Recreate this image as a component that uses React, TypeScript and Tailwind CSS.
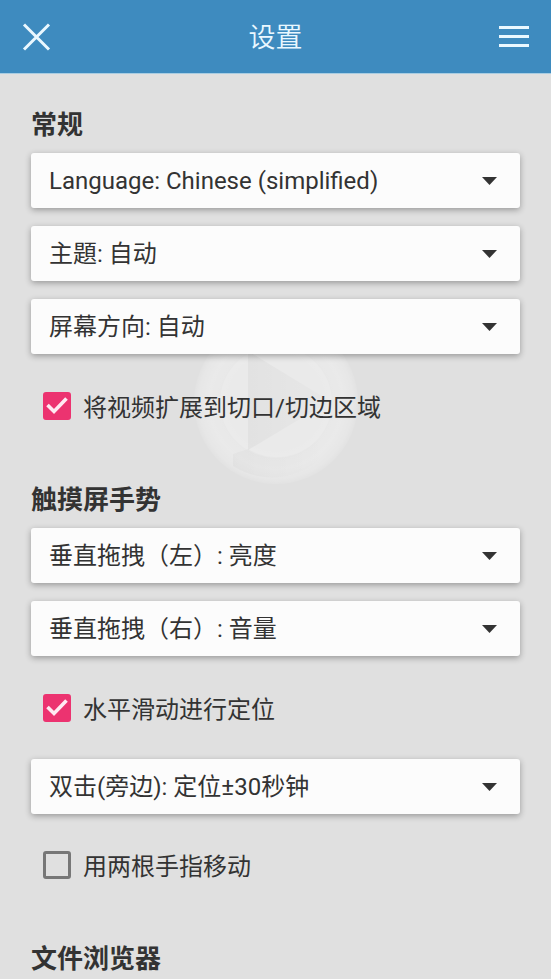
import { useState } from 'react';

interface SelectFieldProps {
  label: string;
  value: string;
}

const SelectField = ({ label, value }: SelectFieldProps) => (
  <div className="relative">
    <select
      aria-label={label}
      className="block w-full h-[55px] pl-[18px] pr-14 pt-px appearance-none rounded-[3px] bg-[#fcfcfc] text-2xl text-[#333] shadow-[0_2px_6px_rgba(0,0,0,0.32)] outline-none"
    >
      <option>{`${label}: ${value}`}</option>
    </select>
    <svg
      className="absolute right-[23px] top-6 pointer-events-none"
      width="15"
      height="8"
      viewBox="0 0 15 8"
      fill="#333"
    >
      <path d="M0 0h15L7.5 8z" />
    </svg>
  </div>
);

interface CheckFieldProps {
  label: string;
  defaultChecked?: boolean;
}

const CheckField = ({ label, defaultChecked = false }: CheckFieldProps) => {
  const [checked, setChecked] = useState(defaultChecked);

  return (
    <label className="flex items-center h-10 pl-3 gap-3 text-2xl">
      <span className="grid shrink-0">
        <input
          type="checkbox"
          checked={checked}
          onChange={(e) => setChecked(e.target.checked)}
          className="col-start-1 row-start-1 w-7 h-7 appearance-none rounded-[3px] border-3 border-[#777] checked:border-[#ec3370] checked:bg-[#ec3370]"
        />
        {checked && (
          <svg
            className="col-start-1 row-start-1 pointer-events-none"
            width="28"
            height="28"
            viewBox="0 0 28 28"
            fill="none"
            stroke="#ffeaf2"
            strokeWidth="3.6"
          >
            <path d="M4.5 13l6.5 6.5L23.5 6.5" />
          </svg>
        )}
      </span>
      <span className="pt-1">{label}</span>
    </label>
  );
};

// Faint play emblem behind the list
const PlayEmblem = () => (
  <svg
    className="absolute left-1/2 top-[320px] -translate-x-1/2 pointer-events-none"
    width="164"
    height="164"
    viewBox="0 0 164 164"
  >
    <defs>
      <radialGradient id="ring">
        <stop offset="0.6" stopColor="#fff" stopOpacity="0.24" />
        <stop offset="0.82" stopColor="#fff" stopOpacity="0.32" />
        <stop offset="0.94" stopColor="#fff" stopOpacity="0.22" />
        <stop offset="1" stopColor="#fff" stopOpacity="0.08" />
      </radialGradient>
      <linearGradient id="play" x1="0" x2="1">
        <stop offset="0" stopColor="#000" stopOpacity="0.035" />
        <stop offset="1" stopColor="#000" stopOpacity="0.01" />
      </linearGradient>
      <linearGradient id="shade" x1="0" x2="1">
        <stop offset="0" stopColor="#000" stopOpacity="0.025" />
        <stop offset="1" stopColor="#000" stopOpacity="0" />
      </linearGradient>
    </defs>
    <circle cx="82" cy="82" r="82" fill="url(#ring)" />
    <circle cx="82" cy="82" r="56" fill="#fff" fillOpacity="0.13" />
    <path d="M54 31v99l82-49z" fill="url(#play)" />
    <path d="M39 134l15-5a56 56 0 0 0 70-10l8 14a72 72 0 0 1-93 13z" fill="url(#shade)" />
  </svg>
);

const Heading = ({ children }: { children: string }) => (
  <h2 className="mb-3 h-8 text-[26px] leading-8 font-bold">{children}</h2>
);

const App = () => {
  return (
    <div className="relative min-h-screen bg-[#e0e0e0] text-[#333] font-[Roboto,'Noto_Sans_CJK_SC',sans-serif]">
      <header className="flex items-center justify-between h-[74px] px-[22px] border-b border-[#a9cde2] bg-[#3e8bbf] text-[#eaf8ff]">
        <button type="button" aria-label="关闭">
          <svg width="30" height="30" viewBox="0 0 30 30" stroke="currentColor" strokeWidth="3">
            <path d="M2 2.5l25 25M27 2.5l-25 25" />
          </svg>
        </button>
        <h1 className="pt-1 text-[27px] font-[350]">设置</h1>
        <button type="button" aria-label="菜单">
          <svg width="30" height="24" viewBox="0 0 30 24" stroke="currentColor" strokeWidth="3">
            <path d="M0 2.5h30M0 11.5h30M0 20.5h30" />
          </svg>
        </button>
      </header>

      <PlayEmblem />

      <main className="relative px-[31px] pt-[35px]">
        <section className="mb-[58px]">
          <Heading>常规</Heading>
          <div className="flex flex-col gap-[18px]">
            <SelectField label="Language" value="Chinese (simplified)" />
            <SelectField label="主題" value="自动" />
            <SelectField label="屏幕方向" value="自动" />
          </div>
          <div className="mt-8">
            <CheckField label="将视频扩展到切口/切边区域" defaultChecked />
          </div>
        </section>

        <section className="mb-[58px]">
          <Heading>触摸屏手势</Heading>
          <div className="flex flex-col gap-[18px]">
            <SelectField label="垂直拖拽（左）" value="亮度" />
            <SelectField label="垂直拖拽（右）" value="音量" />
          </div>
          <div className="mt-8 mb-[31px]">
            <CheckField label="水平滑动进行定位" defaultChecked />
          </div>
          <SelectField label="双击(旁边)" value="定位±30秒钟" />
          <div className="mt-[31px]">
            <CheckField label="用两根手指移动" />
          </div>
        </section>

        <section>
          <h2 className="h-8 text-[26px] leading-8 font-bold">文件浏览器</h2>
        </section>
      </main>
    </div>
  );
};

export default App;
